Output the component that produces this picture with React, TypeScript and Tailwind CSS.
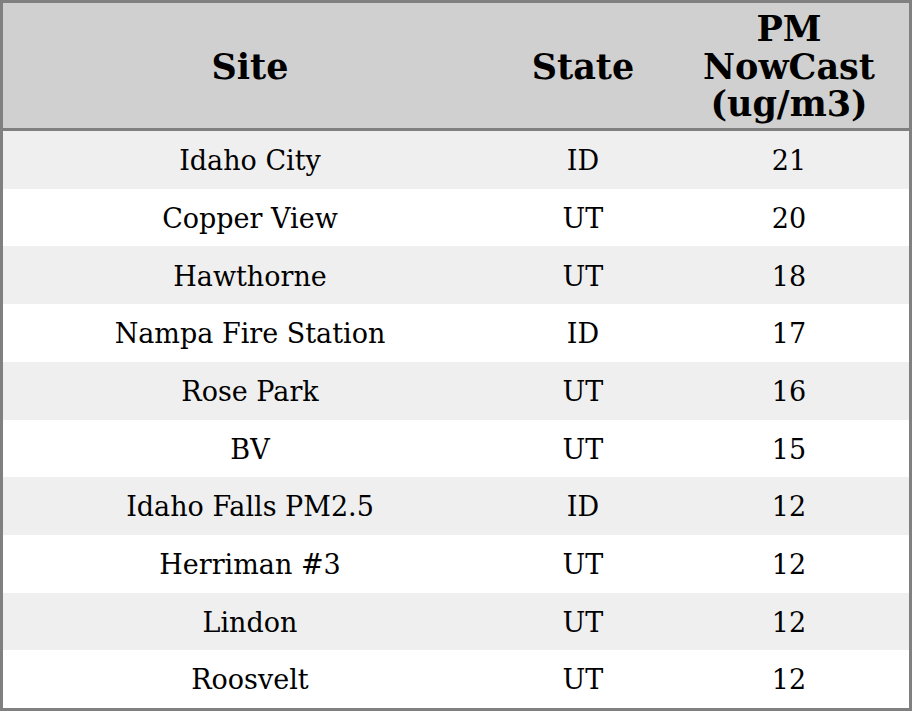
const ROWS: [string, string, number][] = [
  ['Idaho City', 'ID', 21],
  ['Copper View', 'UT', 20],
  ['Hawthorne', 'UT', 18],
  ['Nampa Fire Station', 'ID', 17],
  ['Rose Park', 'UT', 16],
  ['BV', 'UT', 15],
  ['Idaho Falls PM2.5', 'ID', 12],
  ['Herriman #3', 'UT', 12],
  ['Lindon', 'UT', 12],
  ['Roosvelt', 'UT', 12],
]

export default function App() {
  return (
    <div className="flex h-[711px] w-[912px] flex-col border-[3px] border-[#808080] bg-white font-['DejaVu_Serif',serif] text-black">
      {/* Header */}
      <div className="flex h-[128px] shrink-0 items-center border-b-[3px] border-[#808080] bg-[#d0d0d0] pt-[2px] text-[35px] font-bold leading-[37.5px]">
        <div className="w-[494px] text-center">Site</div>
        <div className="w-[172px] text-center">State</div>
        <div className="flex-1 text-center">
          PM
          <br />
          NowCast
          <br />
          (ug/m3)
        </div>
      </div>

      {/* Rows */}
      {ROWS.map(([site, state, value], i) => (
        <div
          key={site}
          className={`flex flex-1 items-center pt-[3px] text-[27px] ${i % 2 === 0 ? 'bg-[#efefef]' : 'bg-white'}`}
        >
          <div className="w-[494px] text-center">{site}</div>
          <div className="w-[172px] text-center">{state}</div>
          <div className="flex-1 text-center">{value}</div>
        </div>
      ))}
    </div>
  )
}
